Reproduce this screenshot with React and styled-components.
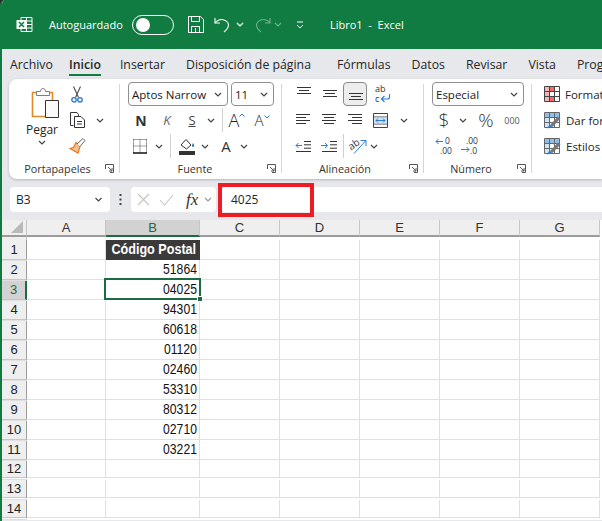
import React from 'react'
import styled, { createGlobalStyle } from 'styled-components'

const GREEN = '#107c41'
const UI_FONT = '"Open Sans", "Noto Sans", sans-serif'
const CELL_FONT = '"Liberation Sans", Arial, sans-serif'

const GlobalStyle = createGlobalStyle`
  html, body { margin: 0; padding: 0; background: #2b2b2b; }
  body { font-family: ${UI_FONT}; color: #262626; }
`

const Window = styled.div`
  position: relative;
  width: 602px;
  height: 521px;
  overflow: hidden;
  background: #e6e8ec;
  border-top-left-radius: 5px;
  border-left: 2px solid ${GREEN};
  box-sizing: border-box;
`

const TitleBar = styled.div`
  height: 49px;
  margin-left: -2px;
  background: ${GREEN};
  display: flex;
  align-items: center;
  color: #fff;
`

const TitleSlot = styled.div`
  width: ${p => p.$w}px;
  flex: none;
  margin-right: ${p => p.$mr || 0}px;
  display: flex;
  align-items: center;
  justify-content: center;
  opacity: ${p => (p.$dim ? 0.4 : 1)};
  & > svg { flex: none; }
`

const AutoLabel = styled.span`
  width: 83px;
  flex: none;
  font-size: 11px;
  white-space: nowrap;
`

const Toggle = styled.div`
  width: 42px;
  height: 20px;
  flex: none;
  box-sizing: border-box;
  border: 1px solid #fff;
  border-radius: 10px;
  padding: 2px;
  margin-right: 9px;
  &::before {
    content: '';
    display: block;
    width: 14px;
    height: 14px;
    margin-left: 1px;
    border-radius: 50%;
    background: #fff;
  }
`

const DocTitle = styled.span`
  font-size: 11px;
  white-space: pre;
  margin-left: 10px;
`

const Tabs = styled.div`
  height: 30px;
  display: flex;
  padding-left: 8px;
  gap: 21px;
  font-size: 12.3px;
  white-space: nowrap;
`

const Tab = styled.div`
  position: relative;
  line-height: 31px;
  margin-right: ${p => p.$mr || 0}px;
  font-weight: ${p => (p.$active ? 600 : 400)};
  ${p => p.$active && `
    &::after {
      content: '';
      position: absolute;
      left: 0;
      right: 0;
      bottom: 3px;
      height: 2px;
      background: ${GREEN};
    }
  `}
`

const Ribbon = styled.div`
  height: 100px;
  margin-left: 7px;
  display: flex;
  background: #fff;
  border-radius: 8px 0 0 8px;
  box-shadow: 0 1px 3px rgba(0, 0, 0, 0.22);
`

const Group = styled.div`
  width: ${p => p.$w}px;
  flex: none;
  box-sizing: border-box;
  display: flex;
  flex-direction: column;
  position: relative;
  &::after {
    content: '';
    display: ${p => (p.$last ? 'none' : 'block')};
    position: absolute;
    right: 0;
    top: 5px;
    bottom: 6px;
    width: 1px;
    background: #d6d6d6;
  }
`

const GroupBody = styled.div`
  height: 80px;
  padding: 2px 0 0 ${p => p.$pl || 0}px;
  display: ${p => (p.$row ? 'flex' : 'block')};
`

const GroupLabel = styled.div`
  height: 20px;
  line-height: 20px;
  text-align: center;
  font-size: 10.8px;
  color: #333;
  padding-right: ${p => p.$pr || 0}px;
`

const Launcher = styled.svg`
  position: absolute;
  right: 6px;
  bottom: 6px;
`

const ToolRow = styled.div`
  height: 26px;
  display: flex;
  align-items: center;
`

const Tool = styled.div`
  width: ${p => p.$w}px;
  height: 24px;
  flex: none;
  display: flex;
  align-items: center;
  justify-content: center;
  box-sizing: border-box;
  font-size: ${p => p.$size || 13}px;
  color: ${p => p.$color || '#333'};
  font-weight: ${p => p.$weight || 400};
  font-style: ${p => (p.$italic ? 'italic' : 'normal')};
  text-decoration: ${p => (p.$under ? 'underline' : 'none')};
  ${p => p.$pressed && `
    background: #ededed;
    border: 1px solid #8a8a8a;
    border-radius: 4px;
    margin: 0 1px;
    width: 24px;
  `}
  & > svg { flex: none; overflow: visible; }
`

const SizeGlyph = styled.span`
  display: flex;
  align-items: flex-start;
  font-size: ${p => p.$size}px;
  line-height: 1;
  font-weight: 300;
  color: #222;
  & > svg { flex: none; margin-top: 2px; }
`

const RowDivider = styled.div`
  width: ${p => p.$w}px;
  height: 24px;
  flex: none;
  display: flex;
  justify-content: center;
  &::before {
    content: '';
    width: 1px;
    background: #d0d0d0;
  }
`

const Select = styled.div`
  width: ${p => p.$w}px;
  height: 24px;
  flex: none;
  box-sizing: border-box;
  margin-right: ${p => p.$mr || 0}px;
  border: 1px solid #8f8f8f;
  border-radius: 4px;
  padding: 0 5px 0 3px;
  display: flex;
  align-items: center;
  justify-content: space-between;
  font-size: 11.5px;
  color: #1a1a1a;
`

const PasteColumn = styled.div`
  width: 48px;
  flex: none;
  display: flex;
  flex-direction: column;
  align-items: center;
  font-size: 12px;
  padding-top: 6px;
  & > svg { margin-left: 5px; }
`

const PasteLabel = styled.span`
  margin-top: 4px;
  line-height: 16px;
`

const PasteChevron = styled.span`
  margin-top: 2px;
  line-height: 0;
`

const StyleItem = styled.div`
  height: 26px;
  display: flex;
  align-items: center;
  gap: 5px;
  white-space: nowrap;
  font-size: 11.5px;
  & > svg { flex: none; }
`

const FormulaRow = styled.div`
  height: 25px;
  margin-top: 8px;
  margin-left: 8px;
  display: flex;
  align-items: center;
`

const NameBox = styled.div`
  width: 100px;
  height: 25px;
  flex: none;
  box-sizing: border-box;
  padding: 0 7px 0 6px;
  display: flex;
  align-items: center;
  justify-content: space-between;
  background: #fff;
  border-radius: 4px;
  font-size: 12px;
`

const Dots = styled.div`
  width: 21px;
  flex: none;
  display: flex;
  justify-content: center;
`

const FormulaButtons = styled.div`
  width: 85px;
  height: 25px;
  flex: none;
  box-sizing: border-box;
  padding: 0 2px 0 6px;
  background: #fff;
  border-radius: 4px;
  display: flex;
  align-items: center;
  gap: 9px;
`

const Fx = styled.span`
  font-family: "Liberation Serif", serif;
  font-style: italic;
  font-size: 17px;
  color: #333;
  margin: 0 -3px 0 3px;
`

const FormulaInput = styled.div`
  flex: 1;
  height: 25px;
  margin-left: 6px;
  padding-left: 9px;
  background: #fff;
  border-radius: 4px 0 0 4px;
  line-height: 25px;
  font-size: 12px;
`

const Highlight = styled.div`
  position: absolute;
  left: 216px;
  top: 183px;
  width: 96px;
  height: 34px;
  box-sizing: border-box;
  border: 4px solid #ed1c24;
`

const Sheet = styled.div`
  margin-top: 8px;
  background: #fff;
  width: 720px;
`

const SheetRow = styled.div`
  display: grid;
  grid-template-columns: 25px 79px 94px 80px 80px 80px 80px 80px;
  height: 20px;
`

const Corner = styled.div`
  background: #efefef;
  border-right: 1px solid #c6c6c6;
  border-bottom: 2px solid #9c9c9c;
  position: relative;
  &::after {
    content: '';
    position: absolute;
    right: 3px;
    bottom: 2px;
    border-style: solid;
    border-width: 0 0 12px 12px;
    border-color: transparent transparent #b9b9b9 transparent;
  }
`

const ColHeader = styled.div`
  display: flex;
  align-items: center;
  justify-content: center;
  font-family: ${CELL_FONT};
  font-size: 13px;
  color: ${p => (p.$on ? '#1d6b41' : '#333')};
  background: ${p => (p.$on ? '#d2d2d2' : '#efefef')};
  border-right: 1px solid #c6c6c6;
  border-bottom: 2px solid ${p => (p.$on ? '#1d6b41' : '#9c9c9c')};
`

const RowHeader = styled.div`
  display: flex;
  align-items: center;
  justify-content: center;
  font-family: ${CELL_FONT};
  font-size: 13px;
  color: ${p => (p.$on ? '#1d6b41' : '#222')};
  background: ${p => (p.$on ? '#d2d2d2' : '#efefef')};
  border-right: ${p => (p.$on ? '2px solid #1d6b41' : '1px solid #9c9c9c')};
  border-bottom: 1px solid #c6c6c6;
`

const Cell = styled.div`
  position: relative;
  box-sizing: border-box;
  border-right: 1px solid #e0e0e0;
  border-bottom: 1px solid #e0e0e0;
  padding-right: 2px;
  text-align: right;
  line-height: 19px;
  font-family: ${CELL_FONT};
  font-size: 14px;
  color: #111;
  white-space: nowrap;
`

const TitleCell = styled(Cell)`
  display: flex;
  justify-content: flex-end;
  background: #3a3a3a;
  border-color: #3a3a3a;
  padding-right: 3px;
  color: #fff;
  font-weight: 700;
`

// Aptos Narrow is not installed: an Arial width squeezed to its digit width
const NarrowText = styled.span`
  display: inline-block;
  flex: none;
  transform: scaleX(${p => p.$x});
  transform-origin: right center;
`

const Selection = styled.div`
  position: absolute;
  z-index: 2;
  left: -2px;
  top: -2px;
  right: -2px;
  bottom: -1px;
  border: 2px solid #1d6b41;
  &::after {
    content: '';
    position: absolute;
    right: -4px;
    bottom: -4px;
    width: 4px;
    height: 4px;
    background: #1d6b41;
    border: 1px solid #fff;
  }
`

const Chevron = ({ color = '#444', w = 8 }) => (
  <svg width={w} height="5" viewBox="0 0 8 5" fill="none">
    <path d="M1 1l3 3 3-3" stroke={color} strokeWidth="1.2" />
  </svg>
)

const ExcelLogo = () => (
  <svg width="17" height="17" viewBox="0 0 17 17" fill="none">
    <path d="M5 1.5h11v14H5z" stroke="#fff" />
    <path d="M10.5 1.5v14M10.5 5h5.5M10.5 8.5h5.5M10.5 12h5.5" stroke="#fff" />
    <rect x="0.5" y="4" width="10" height="9" fill="#fff" />
    <path d="M3 6l5 5M8 6l-5 5" stroke={GREEN} strokeWidth="1.6" />
  </svg>
)

const SaveIcon = () => (
  <svg width="17" height="17" viewBox="0 0 17 17" fill="none" stroke="#fff">
    <path d="M1.5.5h12l3 3v13h-15z" />
    <path d="M4.5.5v5h8v-5M4.5 16.5v-6h8v6M8.5 12v4.5" />
  </svg>
)

const UndoIcon = ({ flip }) => (
  <svg width="16" height="17" viewBox="0 0 16 17" fill="none" stroke="#fff" strokeWidth="1.1" transform={flip ? 'scale(-1 1)' : undefined}>
    <path d="M1 2v5h5" />
    <path d="M1 7c2-2.5 4-3.500 6.500-3.500C11 3.500 14.500 6 14.500 9c0 3-2 5-4.500 7" />
  </svg>
)

const PasteIcon = () => (
  <svg width="28" height="31" viewBox="0 0 28 31" fill="none">
    <path d="M1.500 5.500h20v24h-20z" fill="#fff" stroke="#e08a2a" strokeWidth="1.6" />
    <path d="M5.500 8.500v-4h4c0-4 5-4 5 0h4v4z" fill="#fff" stroke="#7d7d7d" />
    <path d="M14.500 13.500h13v17h-13z" fill="#fafafa" stroke="#333" />
  </svg>
)

const ScissorsIcon = () => (
  <svg width="12" height="17" viewBox="0 0 12 17" fill="none">
    <path d="M2.500 0.500L7.500 11.500M9.500 0.500L4.500 11.500" stroke="#555" strokeWidth="1.200" />
    <circle cx="3" cy="13.800" r="2.200" stroke="#2b7cd3" strokeWidth="1.400" />
    <circle cx="9" cy="13.800" r="2.200" stroke="#2b7cd3" strokeWidth="1.400" />
  </svg>
)

const CopyIcon = () => (
  <svg width="17" height="16" viewBox="0 0 17 16" fill="none" stroke="#333">
    <path d="M4.500 13.500h-3V.5H8l1.500 2V4" />
    <path d="M5.500 4.500H12l3.500 3.500v7.500h-10z" fill="#fff" />
    <path d="M8 9.500h5M8 12h5" />
  </svg>
)

const BrushIcon = () => (
  <svg width="17" height="16" viewBox="0 0 17 16" fill="none">
    <path d="M7 4.500l4 4-2 6.500-8-4.500 3.500-1z" fill="#f7c08f" stroke="#e07b20" strokeWidth="1.200" />
    <path d="M8 6l6-5.500 2 2-5 6" fill="#fff" stroke="#666" />
  </svg>
)

const BordersIcon = () => (
  <svg width="14" height="15" viewBox="0 0 14 15" fill="none">
    <path d="M.5.5h13M.5.500v13M13.500.5v13M7 .5v13M.5 7h13" stroke="#444" strokeDasharray="1 1" />
    <path d="M0 14h14" stroke="#111" strokeWidth="1.300" />
  </svg>
)

const FillIcon = () => (
  <svg width="17" height="17" viewBox="0 0 17 17" fill="none">
    <path d="M2 7l5-5.500 5 5.500-4.500 4z" fill="#fff" stroke="#333" />
    <path d="M14 5c1 1.500 1.500 2.500 1 3.500-.6.8-2 .5-2-.7 0-1 .5-1.800 1-2.800z" fill="#1d72c4" />
    <rect x="0" y="13" width="16" height="4" fill="#333" />
  </svg>
)

const Caret = ({ down }) => (
  <svg width="6" height="4" viewBox="0 0 6 4" fill="none" stroke="#2b7cd3">
    <path d={down ? 'M.5 .5L3 3l2.500-2.500' : 'M.5 3.500L3 1l2.500 2.500'} />
  </svg>
)

const LinesIcon = ({ pattern }) => {
  const rows = {
    top: [[2, 16, 0], [4, 14, 3], [2, 16, 6]],
    mid: [[2, 16, 3], [4, 14, 6], [2, 16, 9]],
    bot: [[2, 16, 6], [4, 14, 9], [2, 16, 12]],
    left: [[1, 15, 1], [1, 11, 4], [1, 15, 7], [1, 11, 10]],
    center: [[1, 15, 1], [3, 13, 4], [1, 15, 7], [3, 13, 10]],
    right: [[1, 15, 1], [5, 15, 4], [1, 15, 7], [5, 15, 10]],
  }[pattern]
  return (
    <svg width="16" height="14" viewBox="0 0 16 14" stroke="#333">
      {rows.map(([a, b, y]) => <path key={y} d={`M${a} ${y + 0.5}H${b}`} />)}
    </svg>
  )
}

const WrapIcon = () => (
  <svg width="17" height="18" viewBox="0 0 17 18" fill="none">
    <text x="1" y="7" fontSize="9" fontFamily="Open Sans, sans-serif" fill="#333">ab</text>
    <text x="1" y="17" fontSize="9" fontFamily="Open Sans, sans-serif" fill="#333">c</text>
    <path d="M15.500 9v3c0 1.500-1 2-2 2H8M10.500 11l-3 3 3 3" stroke="#2b7cd3" strokeWidth="1.100" />
  </svg>
)

const MergeIcon = () => (
  <svg width="15" height="15" viewBox="0 0 15 15" fill="none">
    <path d="M.5.5h14v14H.5zM.5 4h14M.5 11h14" stroke="#444" />
    <rect x="1" y="4.500" width="13" height="6" fill="#cfe4f7" />
    <path d="M3 7.500h9M5 5.500l-2 2 2 2M10 5.500l2 2-2 2" stroke="#2b7cd3" />
  </svg>
)

const IndentIcon = ({ right }) => (
  <svg width="16" height="11" viewBox="0 0 16 11" fill="none">
    <path d="M9 .5h7M9 3.800h7M9 7.200h7M1 10.500h15" stroke="#333" />
    {right
      ? <path d="M0 4.500h6M4 2l2.500 2.500L4 7" stroke="#2b7cd3" />
      : <path d="M7 4.500H1M3.500 2L1 4.500 3.500 7" stroke="#2b7cd3" />}
  </svg>
)

const OrientIcon = () => (
  <svg width="18" height="16" viewBox="0 0 18 16" fill="none">
    <text x="0" y="10" fontSize="10" fontFamily="Open Sans, sans-serif" fill="#333" transform="rotate(-35 5 8)">ab</text>
    <path d="M5 15.500L16.500 3M11.500 2.500h5.500V8" stroke="#2b7cd3" />
  </svg>
)

const DecimalIcon = ({ more }) => (
  <svg width="20" height="18" viewBox="0 0 20 18" fill="none">
    <text x={more ? 5 : 10} y="7" fontSize="8.500" fontFamily="Open Sans, sans-serif" fill="#333">{more ? '.00' : '0'}</text>
    <text x={more ? 9 : 5} y="16.500" fontSize="8.500" fontFamily="Open Sans, sans-serif" fill="#333">{more ? '.0' : '.00'}</text>
    {more
      ? <path d="M0 12.500h8M5.500 10l2.500 2.500L5.500 15" stroke="#2b7cd3" />
      : <path d="M8 4.500H1M3.500 2L1 4.500 3.500 7" stroke="#2b7cd3" />}
  </svg>
)

const CondFormatIcon = () => (
  <svg width="16" height="16" viewBox="0 0 16 16" fill="none">
    <rect x="5" y="1" width="6" height="4" fill="#f36c6c" />
    <rect x="5" y="10" width="6" height="5" fill="#f36c6c" />
    <rect x="1" y="1" width="4" height="14" fill="#f9b4b4" />
    <path d="M.5.5h15v15H.5zM.5 5.500h15M.5 10.500h15M5.500.5v15M10.500.5v15" stroke="#444" />
  </svg>
)

const TableStyleIcon = () => (
  <svg width="17" height="17" viewBox="0 0 17 17" fill="none">
    <rect x="1" y="1" width="14" height="4" fill="#8fc0ea" />
    <rect x="1" y="5" width="5" height="10" fill="#cfe4f7" />
    <path d="M.5.5h15v15H.5zM.5 5.500h15M.5 10.500h15M5.500.5v15M10.500.5v15" stroke="#666" />
    <path d="M6 13l8-8.500 2.500 2-8 8.500z" fill="#777" />
    <path d="M3 16.500l2.500-4 3 2.500z" fill="#2b7cd3" />
  </svg>
)

const LauncherIcon = () => (
  <Launcher width="9" height="9" viewBox="0 0 9 9" fill="none" stroke="#555">
    <path d="M.5 5V.5H8.500V8.500H5M3 3l4 4M4 7h3V4" />
  </Launcher>
)

const DotsIcon = () => (
  <svg width="3" height="11" viewBox="0 0 3 11" fill="#444">
    <rect x=".5" y="0" width="2" height="2" />
    <rect x=".5" y="4.500" width="2" height="2" />
    <rect x=".5" y="9" width="2" height="2" />
  </svg>
)

const CrossIcon = () => (
  <svg width="13" height="13" viewBox="0 0 13 13" fill="none" stroke="#c4c4c4" strokeWidth="1.100">
    <path d="M1 1l11 11M12 1L1 12" />
  </svg>
)

const CheckIcon = () => (
  <svg width="15" height="12" viewBox="0 0 15 12" fill="none" stroke="#c4c4c4" strokeWidth="1.100">
    <path d="M1 6l4.500 5L14 1" />
  </svg>
)

const columns = ['A', 'B', 'C', 'D', 'E', 'F', 'G', 'H']
const postalCodes = ['51864', '04025', '94301', '60618', '01120', '02460', '53310', '80312', '02710', '03221']
const tabs = [
  { label: 'Archivo', mr: -5 },
  { label: 'Inicio', mr: -2 },
  { label: 'Insertar' },
  { label: 'Disposición de página', mr: 5 },
  { label: 'Fórmulas' },
  { label: 'Datos' },
  { label: 'Revisar' },
  { label: 'Vista' },
  { label: 'Programador' },
]

export default function App() {
  const rows = Array.from({ length: 14 }, (_, i) => i + 1)

  return (
    <Window>
      <GlobalStyle />

      <TitleBar>
        <TitleSlot $w={49}><ExcelLogo /></TitleSlot>
        <AutoLabel>Autoguardado</AutoLabel>
        <Toggle />
        <TitleSlot $w={24}><SaveIcon /></TitleSlot>
        <TitleSlot $w={30}><UndoIcon /></TitleSlot>
        <TitleSlot $w={6} $mr={7}><Chevron color="#fff" /></TitleSlot>
        <TitleSlot $w={26} $dim><UndoIcon flip /></TitleSlot>
        <TitleSlot $w={4} $dim><Chevron color="#fff" /></TitleSlot>
        <TitleSlot $w={40}>
          <svg width="8" height="8" viewBox="0 0 8 8" fill="none" stroke="#fff"><path d="M1 1h6M1 4l3 3 3-3" /></svg>
        </TitleSlot>
        <DocTitle>Libro1  -  Excel</DocTitle>
      </TitleBar>

      <Tabs>
        {tabs.map(t => (
          <Tab key={t.label} $active={t.label === 'Inicio'} $mr={t.mr}>{t.label}</Tab>
        ))}
      </Tabs>

      <Ribbon>
        <Group $w={111}>
          <GroupBody $row $pl={9}>
            <PasteColumn>
              <PasteIcon />
              <PasteLabel>Pegar</PasteLabel>
              <PasteChevron><Chevron /></PasteChevron>
            </PasteColumn>
            <div>
              <ToolRow><Tool $w={22}><ScissorsIcon /></Tool></ToolRow>
              <ToolRow>
                <Tool $w={22}><CopyIcon /></Tool>
                <Tool $w={24}><Chevron /></Tool>
              </ToolRow>
              <ToolRow><Tool $w={22}><BrushIcon /></Tool></ToolRow>
            </div>
          </GroupBody>
          <GroupLabel $pr={14}>Portapapeles</GroupLabel>
          <LauncherIcon />
        </Group>

        <Group $w={162}>
          <GroupBody $pl={8}>
            <ToolRow>
              <Select $w={100} $mr={3}>Aptos Narrow<Chevron /></Select>
              <Select $w={43}>11<Chevron /></Select>
            </ToolRow>
            <ToolRow>
              <Tool $w={26} $weight={700} $size={14}>N</Tool>
              <Tool $w={26} $italic $size={13} $color="#666">K</Tool>
              <Tool $w={24} $under $size={13} $color="#444">S</Tool>
              <Tool $w={14}><Chevron /></Tool>
              <RowDivider $w={8} />
              <Tool $w={22}><SizeGlyph $size={18}>A<Caret /></SizeGlyph></Tool>
              <Tool $w={28}><SizeGlyph $size={15}>A<Caret down /></SizeGlyph></Tool>
            </ToolRow>
            <ToolRow>
              <Tool $w={24}><BordersIcon /></Tool>
              <Tool $w={14}><Chevron /></Tool>
              <RowDivider $w={8} />
              <Tool $w={26}><FillIcon /></Tool>
              <Tool $w={10}><Chevron /></Tool>
              <Tool $w={32} $size={15}>A</Tool>
              <Tool $w={4}><Chevron /></Tool>
            </ToolRow>
          </GroupBody>
          <GroupLabel $pr={12}>Fuente</GroupLabel>
          <LauncherIcon />
        </Group>

        <Group $w={142}>
          <GroupBody $pl={8}>
            <ToolRow>
              <Tool $w={26}><LinesIcon pattern="top" /></Tool>
              <Tool $w={26}><LinesIcon pattern="mid" /></Tool>
              <Tool $w={26} $pressed><LinesIcon pattern="bot" /></Tool>
              <Tool $w={28}><WrapIcon /></Tool>
            </ToolRow>
            <ToolRow>
              <Tool $w={26}><LinesIcon pattern="left" /></Tool>
              <Tool $w={26}><LinesIcon pattern="center" /></Tool>
              <Tool $w={26}><LinesIcon pattern="right" /></Tool>
              <Tool $w={24}><MergeIcon /></Tool>
              <Tool $w={24}><Chevron /></Tool>
            </ToolRow>
            <ToolRow>
              <Tool $w={26}><IndentIcon /></Tool>
              <Tool $w={26}><IndentIcon right /></Tool>
              <RowDivider $w={2} />
              <Tool $w={28}><OrientIcon /></Tool>
              <Tool $w={4}><Chevron /></Tool>
            </ToolRow>
          </GroupBody>
          <GroupLabel $pr={16}>Alineación</GroupLabel>
          <LauncherIcon />
        </Group>

        <Group $w={108}>
          <GroupBody $pl={8}>
            <ToolRow>
              <Select $w={92}>Especial<Chevron /></Select>
            </ToolRow>
            <ToolRow>
              <Tool $w={24} $size={19} $weight={300}>$</Tool>
              <Tool $w={14}><Chevron /></Tool>
              <Tool $w={32} $size={19} $weight={300}>%</Tool>
              <Tool $w={20} $size={9} $color="#555">000</Tool>
            </ToolRow>
            <ToolRow>
              <Tool $w={26}><DecimalIcon /></Tool>
              <Tool $w={26}><DecimalIcon more /></Tool>
            </ToolRow>
          </GroupBody>
          <GroupLabel $pr={14}>Número</GroupLabel>
          <LauncherIcon />
        </Group>

        <Group $w={140} $last>
          <GroupBody $pl={12}>
            <StyleItem><CondFormatIcon />Formato condicional</StyleItem>
            <StyleItem><TableStyleIcon />Dar formato como tabla</StyleItem>
            <StyleItem><TableStyleIcon />Estilos de celda</StyleItem>
          </GroupBody>
        </Group>
      </Ribbon>

      <FormulaRow>
        <NameBox>B3<Chevron w={9} /></NameBox>
        <Dots><DotsIcon /></Dots>
        <FormulaButtons>
          <CrossIcon />
          <CheckIcon />
          <Fx>fx</Fx>
          <Chevron color="#999" />
        </FormulaButtons>
        <FormulaInput>4025</FormulaInput>
      </FormulaRow>

      <Sheet>
        <SheetRow>
          <Corner />
          {columns.map(c => <ColHeader key={c} $on={c === 'B'}>{c}</ColHeader>)}
        </SheetRow>
        {rows.map(r => (
          <SheetRow key={r}>
            <RowHeader $on={r === 3}>{r}</RowHeader>
            {columns.map(c => {
              if (c === 'B' && r === 1) {
                return <TitleCell key={c}><NarrowText $x={0.9}>Código Postal</NarrowText></TitleCell>
              }
              const code = c === 'B' ? postalCodes[r - 2] : null
              return (
                <Cell key={c}>
                  {code && <NarrowText $x={0.87}>{code}</NarrowText>}
                  {c === 'B' && r === 3 && <Selection />}
                </Cell>
              )
            })}
          </SheetRow>
        ))}
      </Sheet>

      <Highlight />
    </Window>
  )
}
